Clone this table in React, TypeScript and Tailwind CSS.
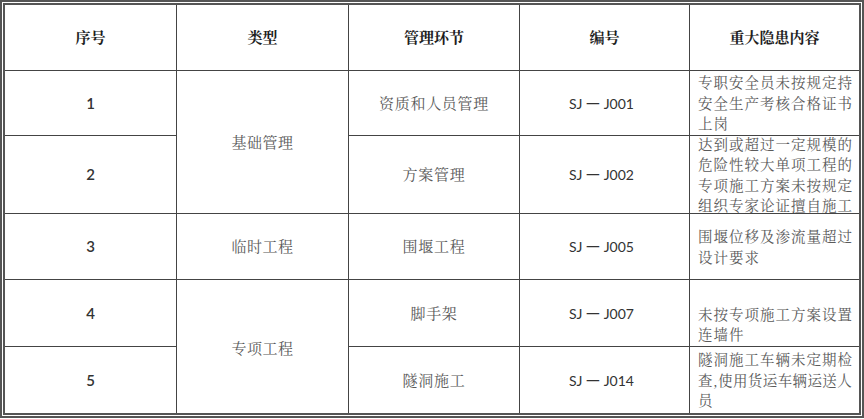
const CJK = 'font-["Noto_Serif_CJK_SC","Noto_Sans_CJK_SC",serif]';

const rows = [
  { no: '1', step: '资质和人员管理', code: 'SJ 一 J001', desc: ['专职安全员未按规定持', '安全生产考核合格证书', '上岗'] },
  {
    no: '2',
    step: '方案管理',
    code: 'SJ 一 J002',
    desc: ['达到或超过一定规模的', '危险性较大单项工程的', '专项施工方案未按规定', '组织专家论证擅自施工'],
  },
  { no: '3', step: '围堰工程', code: 'SJ 一 J005', desc: ['围堰位移及渗流量超过', '设计要求'] },
  { no: '4', step: '脚手架', code: 'SJ 一 J007', desc: ['未按专项施工方案设置', '连墙件'] },
  { no: '5', step: '隧洞施工', code: 'SJ 一 J014', desc: ['隧洞施工车辆未定期检', '查,使用货运车辆运送人', '员'] },
];

function Cell({ children, className = '' }: { children: React.ReactNode; className?: string }) {
  return <div className={`bg-white flex items-center justify-center ${className}`}>{children}</div>;
}

export default function App() {
  return (
    <div className="w-[864px] h-[419px] bg-white">
      <div className="w-[864px] border-[5px] border-double border-[#555]">
        <div className="grid grid-cols-[171px_171px_170px_169px_169px] grid-rows-[65px_64px_77px_65px_66px_66px] gap-px bg-[#444]">
          {['序号', '类型', '管理环节', '编号', '重大隐患内容'].map((h) => (
            <Cell key={h} className={`${CJK} text-[15px] font-bold text-[#1e1e1e]`}>
              {h}
            </Cell>
          ))}

          {rows.map((r, i) => (
            <div key={r.no} className="contents">
              <Cell className="font-['Lato',sans-serif] text-[15px] font-semibold text-[#333]">{r.no}</Cell>
              {i === 0 && (
                <Cell className={`${CJK} row-span-2 text-[15px] tracking-[0.5px] text-[#5a5a5a]`}>基础管理</Cell>
              )}
              {i === 2 && (
                <Cell className={`${CJK} text-[15px] tracking-[0.5px] text-[#5a5a5a]`}>临时工程</Cell>
              )}
              {i === 3 && (
                <Cell className={`${CJK} row-span-2 text-[15px] tracking-[0.5px] text-[#5a5a5a] pt-[4px]`}>专项工程</Cell>
              )}
              <Cell className={`${CJK} text-[15px] tracking-[0.7px] text-[#5a5a5a]`}>{r.step}</Cell>
              <Cell className="font-['Lato',sans-serif] text-[14px] text-[#333] pr-[6px]">{r.code}</Cell>
              <Cell className={`justify-start pl-[8px] ${i === 3 ? 'pt-[22px]' : ''}`}>
                <div className={`${CJK} text-[14.5px] leading-[20.5px] tracking-[1px] text-[#5a5a5a]`}>
                  {r.desc.map((line) => (
                    <p key={line} className={`whitespace-nowrap ${line.includes(',') ? 'tracking-[0.4px]' : ''}`}>
                      {line}
                    </p>
                  ))}
                </div>
              </Cell>
            </div>
          ))}
        </div>
      </div>
    </div>
  );
}
